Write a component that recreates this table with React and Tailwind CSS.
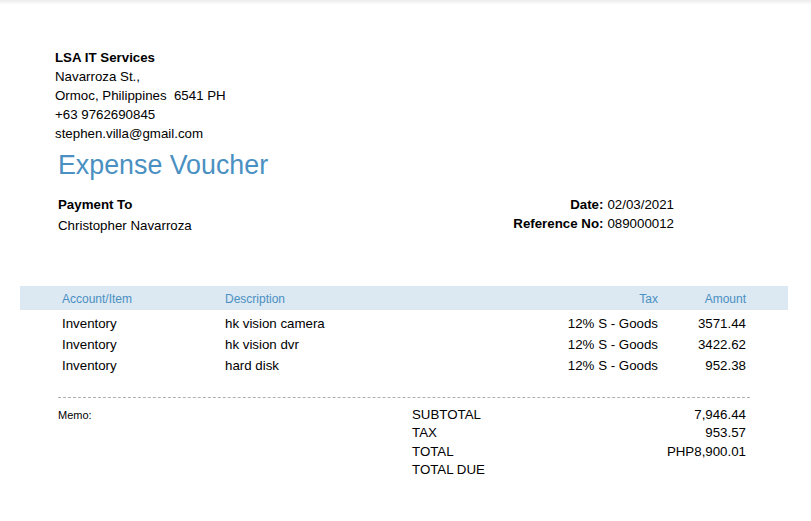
export default function App() {
  const rows = [
    ["Inventory", "hk vision camera", "12% S - Goods", "3571.44"],
    ["Inventory", "hk vision dvr", "12% S - Goods", "3422.62"],
    ["Inventory", "hard disk", "12% S - Goods", "952.38"],
  ];
  const totals = [
    ["SUBTOTAL", "7,946.44"],
    ["TAX", "953.57"],
    ["TOTAL", "PHP8,900.01"],
    ["TOTAL DUE", ""],
  ];
  return (
    <div className="w-[811px] h-[521px] bg-white text-black overflow-hidden" style={{ fontFamily: '"Liberation Sans", Arial, sans-serif' }}>
      <div className="h-[5px] bg-gradient-to-b from-[#ececec] to-white" />
      <div className="pl-[55px] pt-[43px] text-[13.3px] leading-[19px]">
        <div className="font-bold">LSA IT Services</div>
        <div>Navarroza St.,</div>
        <div>Ormoc, Philippines&nbsp; 6541 PH</div>
        <div>+63 9762690845</div>
        <div>stephen.villa@gmail.com</div>
      </div>
      <div className="pl-[58px] mt-[7px] text-[26.8px] leading-[30px] text-[#4a90c2]">Expense Voucher</div>
      <div className="flex items-start justify-between pl-[58px] pr-[137px] mt-[14px] text-[13.3px]">
        <div className="leading-[21px]">
          <div className="font-bold">Payment To</div>
          <div>Christopher Navarroza</div>
        </div>
        <div className="grid grid-cols-[auto_auto] gap-x-[4px] leading-[19px] pt-[1px]">
          <div className="font-bold text-right">Date:</div>
          <div>02/03/2021</div>
          <div className="font-bold text-right">Reference No:</div>
          <div>089000012</div>
        </div>
      </div>
      <div className="mt-[50px] ml-[20px] w-[768px]">
        <div className="flex items-center h-[24px] pt-[2px] bg-[#dce8f2] text-[12px] text-[#4a90c2]">
          <div className="pl-[42px] w-[205px]">Account/Item</div>
          <div className="flex-1">Description</div>
          <div className="w-[120px] text-right">Tax</div>
          <div className="w-[88px] text-right">Amount</div>
          <div className="w-[42px]" />
        </div>
        <div className="pt-[3px] text-[13.3px] leading-[21px]">
          {rows.map((r, i) => (
            <div key={i} className="flex">
              <div className="pl-[42px] w-[205px]">{r[0]}</div>
              <div className="flex-1">{r[1]}</div>
              <div className="w-[120px] text-right">{r[2]}</div>
              <div className="w-[88px] text-right">{r[3]}</div>
              <div className="w-[42px]" />
            </div>
          ))}
        </div>
      </div>
      <div className="ml-[58px] w-[692px] mt-[21px] border-t border-dashed border-[#b0b0b0]" />
      <div className="flex ml-[58px] w-[688px] mt-[7px]">
        <div className="w-[354px] text-[11px] leading-[18px] pt-[1px]">Memo:</div>
        <div className="flex-1 text-[13.3px] leading-[18.4px] pt-[1px]">
          {totals.map((t, i) => (
            <div key={i} className="flex justify-between">
              <div>{t[0]}</div>
              <div>{t[1]}</div>
            </div>
          ))}
        </div>
      </div>
    </div>
  );
}
